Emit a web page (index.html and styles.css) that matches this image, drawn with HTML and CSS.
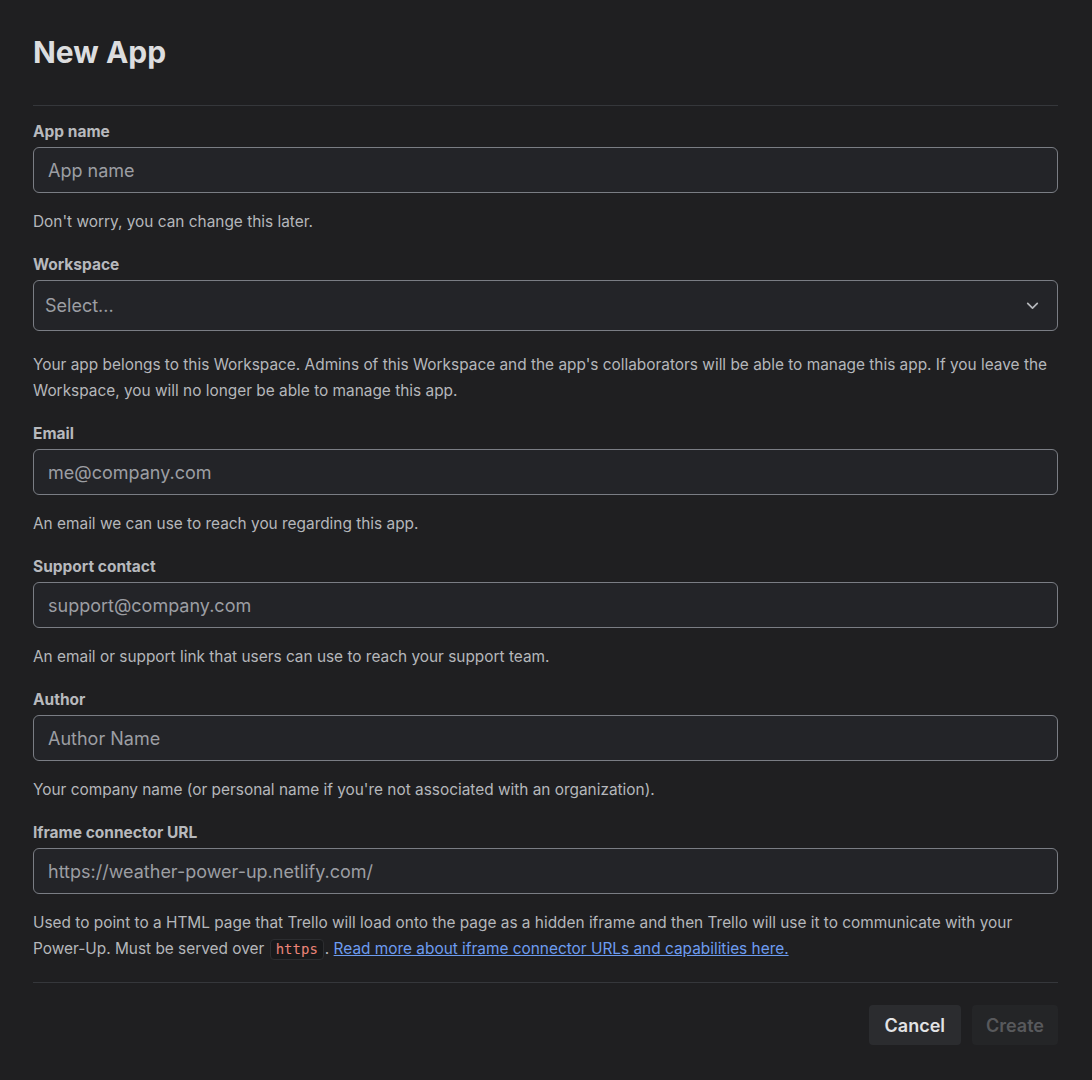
FILE: index.html
```html
<!DOCTYPE html>
<html lang="en">
<head>
  <meta charset="UTF-8">
  <meta name="viewport" content="width=device-width, initial-scale=1.0">
  <title>New App</title>
  <link rel="stylesheet" href="styles.css">
</head>
<body>
  <div class="page">
    <h1 class="title">New App</h1>
    <hr class="divider">

    <form class="app-form">
      <div class="field">
        <label class="label" for="appName">App name</label>
        <input class="text-input" type="text" id="appName" placeholder="App name">
        <p class="help">Don't worry, you can change this later.</p>
      </div>

      <div class="field">
        <label class="label" for="workspace">Workspace</label>
        <div class="select">
          <span class="select-value">Select...</span>
          <svg class="chevron" width="16" height="16" viewBox="0 0 16 16" fill="none">
            <path d="M3.5 6l4.5 4.5L12.5 6" stroke="currentColor" stroke-width="1.6" stroke-linecap="round" stroke-linejoin="round"/>
          </svg>
        </div>
        <p class="help">Your app belongs to this Workspace. Admins of this Workspace and the app's collaborators will be able to manage this app. If you leave the Workspace, you will no longer be able to manage this app.</p>
      </div>

      <div class="field">
        <label class="label" for="email">Email</label>
        <input class="text-input" type="email" id="email" placeholder="me@company.com">
        <p class="help">An email we can use to reach you regarding this app.</p>
      </div>

      <div class="field">
        <label class="label" for="support">Support contact</label>
        <input class="text-input" type="text" id="support" placeholder="support@company.com">
        <p class="help">An email or support link that users can use to reach your support team.</p>
      </div>

      <div class="field">
        <label class="label" for="author">Author</label>
        <input class="text-input" type="text" id="author" placeholder="Author Name">
        <p class="help">Your company name (or personal name if you're not associated with an organization).</p>
      </div>

      <div class="field">
        <label class="label" for="iframeUrl">Iframe connector URL</label>
        <input class="text-input" type="url" id="iframeUrl" placeholder="https://weather-power-up.netlify.com/">
        <p class="help">Used to point to a HTML page that Trello will load onto the page as a hidden iframe and then Trello will use it to communicate with your Power-Up. Must be served over <code class="code">https</code>. <a class="link" href="#">Read more about iframe connector URLs and capabilities here.</a></p>
      </div>
    </form>

    <hr class="divider divider-bottom">

    <div class="actions">
      <button type="button" class="btn btn-cancel">Cancel</button>
      <button type="button" class="btn btn-create" disabled>Create</button>
    </div>
  </div>
</body>
</html>
```

FILE: styles.css
```css
body {
  margin: 0;
  background-color: #1f1f21;
  font-family: Inter, "Noto Sans", sans-serif;
  color: #b5b7bb;
}

.page {
  padding: 30px 34px 35px 33px;
}

.title {
  margin: 0;
  font-size: 30px;
  line-height: 44px;
  font-weight: 700;
  color: #dcdddf;
}

.divider {
  border: 0;
  border-top: 1px solid #35373b;
  margin: 31px 0 16px;
}

.divider-bottom {
  margin: 20px 0 22px;
}

.app-form {
  display: flex;
  flex-direction: column;
  gap: 20px;
}

.field {
  display: flex;
  flex-direction: column;
}

.label {
  font-size: 15.5px;
  font-weight: 700;
  line-height: 20px;
  color: #b7b9bd;
  margin-bottom: 5px;
}

.text-input {
  box-sizing: border-box;
  height: 46px;
  padding: 0 14px;
  background-color: #232428;
  border: 1.5px solid #7a7d84;
  border-radius: 6px;
  font-family: inherit;
  font-size: 18px;
  color: #d0d2d6;
  outline: none;
}

.text-input::placeholder {
  color: #9c9ea3;
}

.select {
  box-sizing: border-box;
  height: 51px;
  padding: 0 16px 0 11px;
  background-color: #232428;
  border: 1.5px solid #7a7d84;
  border-radius: 6px;
  display: flex;
  align-items: center;
  justify-content: space-between;
  margin-bottom: 5px;
}

.select-value {
  font-size: 18px;
  color: #9c9ea3;
}

.chevron {
  width: 17px;
  height: 17px;
  color: #b5b7bb;
}

.help {
  margin: 16px 0 0;
  font-size: 15.4px;
  line-height: 26px;
  color: #b5b7bb;
}

.code {
  display: inline-block;
  font-family: "DejaVu Sans Mono", "Liberation Mono", monospace;
  font-size: 14px;
  line-height: 19px;
  color: #ec8579;
  background-color: #18191b;
  border: 1px solid #2c2d30;
  border-radius: 4px;
  padding: 0 5px;
  margin: 0 1px;
}

.link {
  color: #6d9cf0;
  text-decoration: underline;
}

.actions {
  display: flex;
  justify-content: flex-end;
  gap: 11px;
}

.btn {
  height: 40px;
  border: 0;
  border-radius: 4px;
  font-family: inherit;
  font-size: 18px;
  font-weight: 600;
}

.btn-cancel {
  padding: 0 16px;
  background-color: #2b2c2f;
  color: #e2e3e5;
}

.btn-create {
  padding: 0 14px;
  background-color: #242527;
  color: #58595c;
}
```
